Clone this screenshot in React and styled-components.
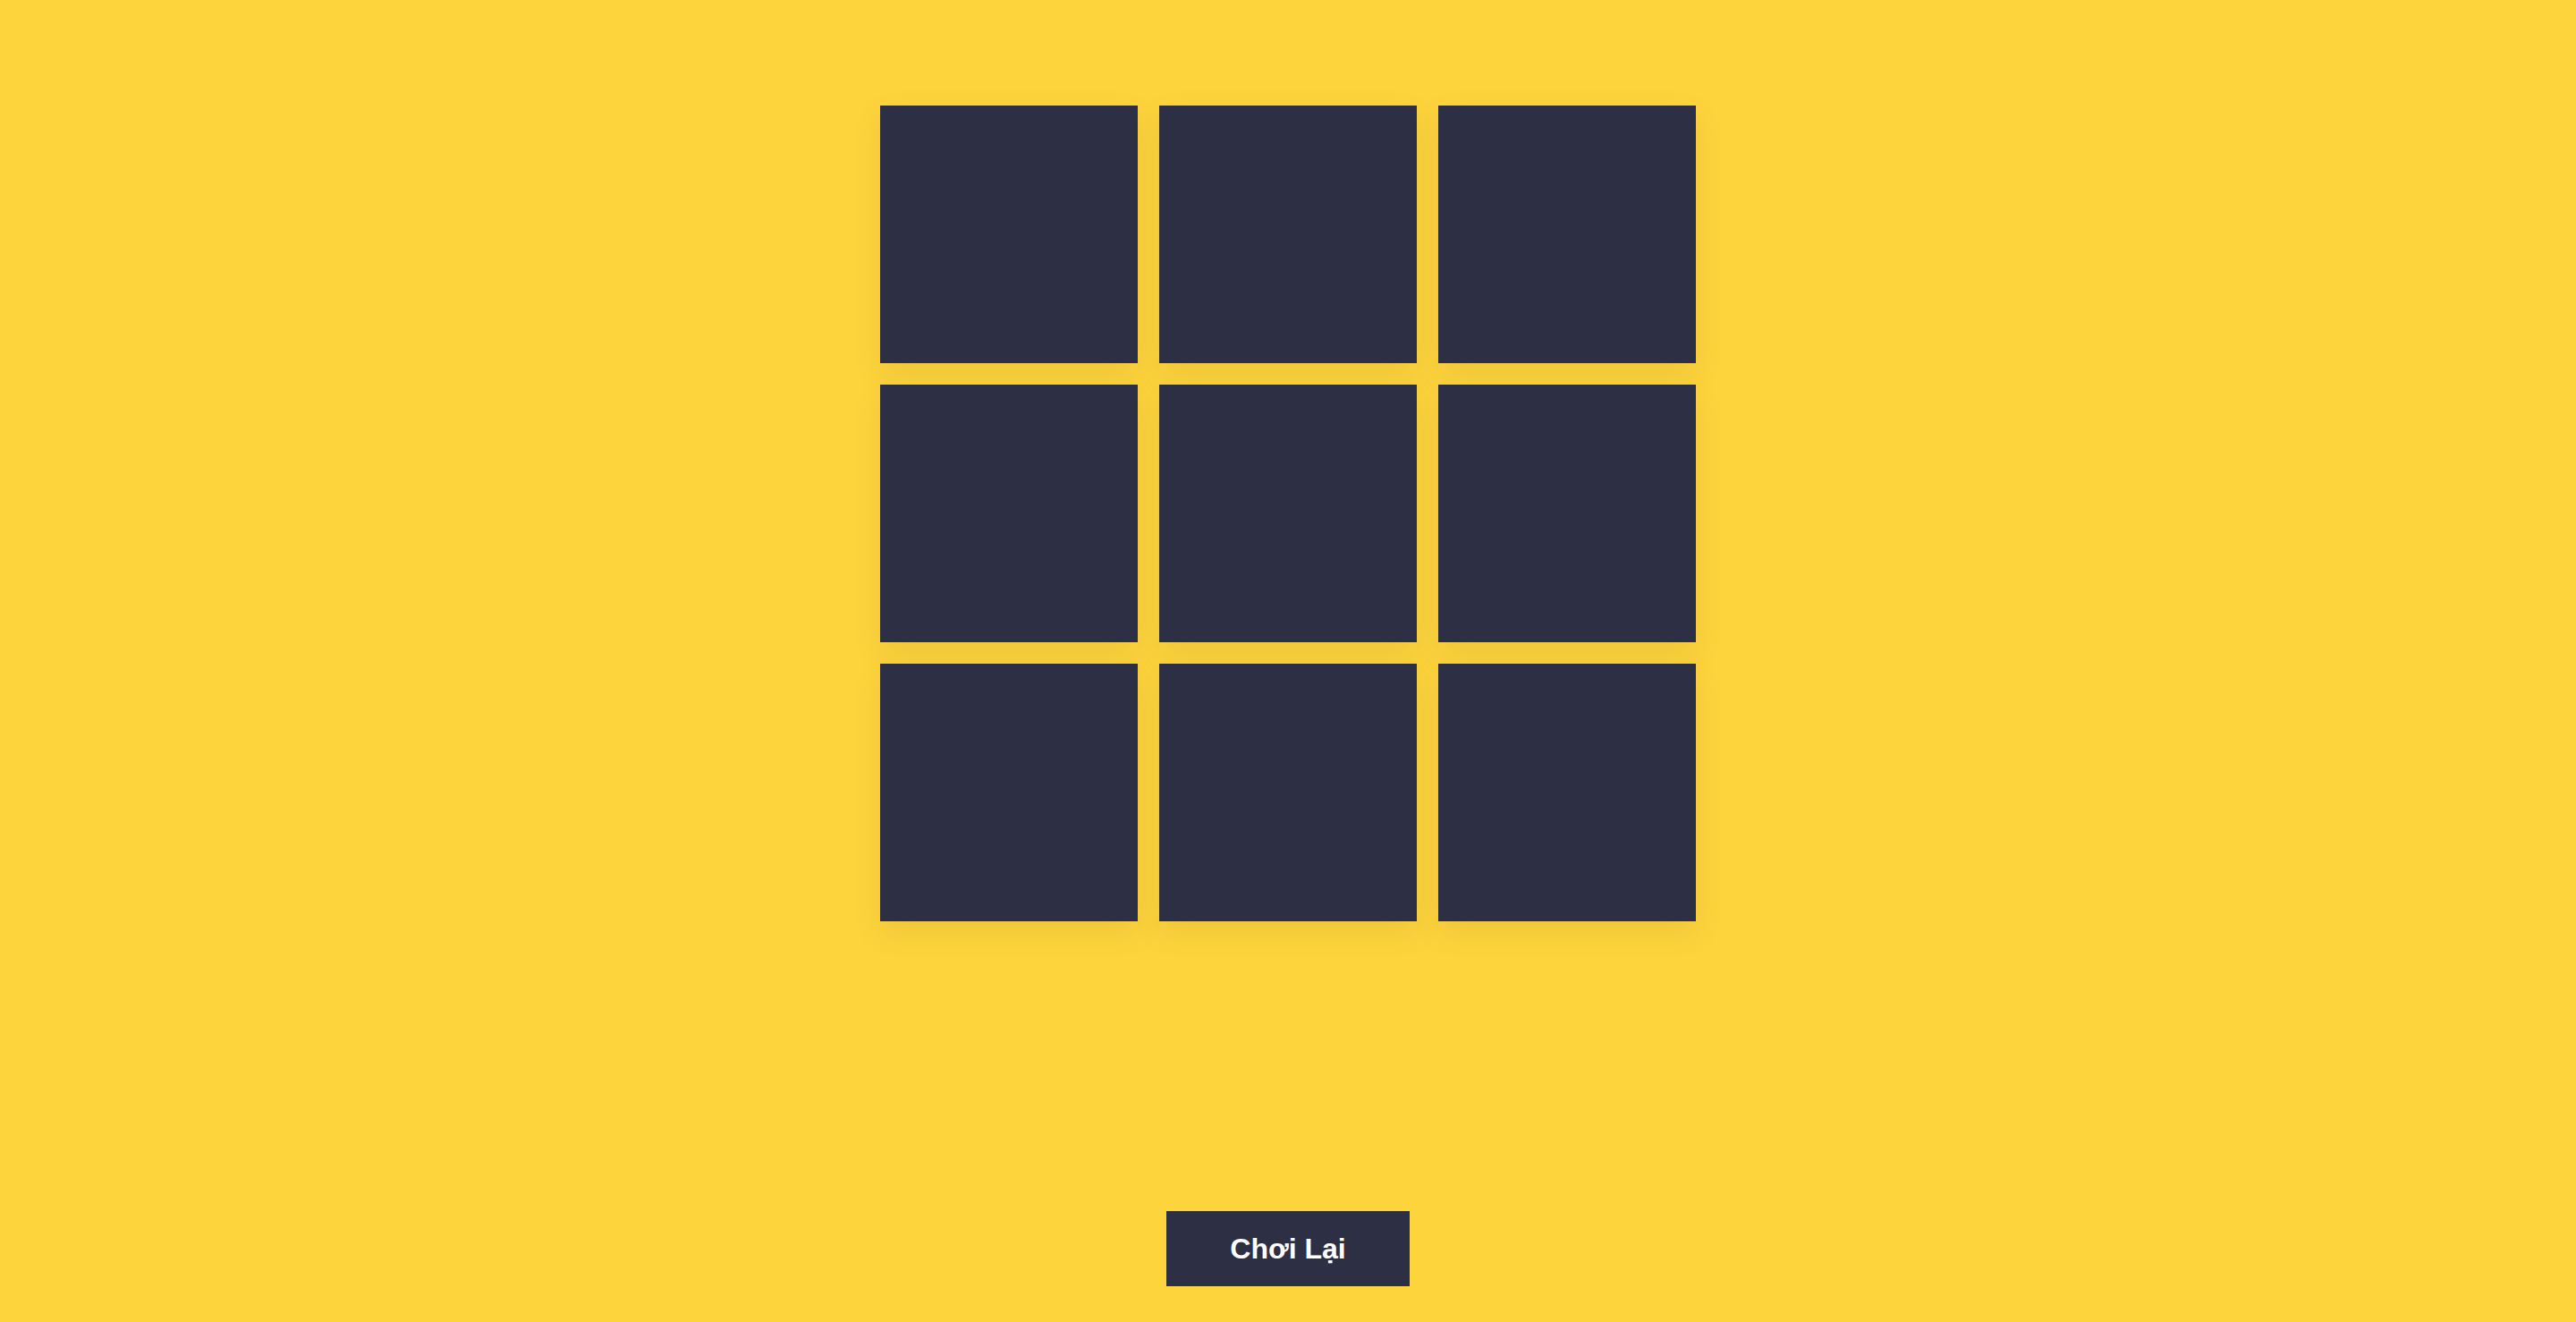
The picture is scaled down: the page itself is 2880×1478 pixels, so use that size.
import React from 'react';
import styled, { createGlobalStyle } from 'styled-components';

const GlobalStyle = createGlobalStyle`
  html, body {
    margin: 0;
    padding: 0;
    background-color: #fdd43c;
  }
  * {
    box-sizing: border-box;
  }
`;

const Page = styled.div`
  min-height: 100vh;
  display: flex;
  flex-direction: column;
  align-items: center;
  padding: 118px 0 40px;
  background-color: #fdd43c;
  font-family: "Liberation Sans", Arial, sans-serif;
`;

const Board = styled.div`
  display: grid;
  grid-template-columns: repeat(3, 288px);
  grid-auto-rows: 288px;
  gap: 24px;
`;

const Cell = styled.div`
  background-color: #2d2f44;
  box-shadow: 0 12px 30px rgba(120, 100, 60, 0.12);
`;

const ResetButton = styled.button`
  margin-top: auto;
  width: 272px;
  height: 84px;
  border: none;
  background-color: #2d2f44;
  color: #ffffff;
  font-family: "Liberation Sans", Arial, sans-serif;
  font-weight: bold;
  font-size: 32px;
  cursor: pointer;
`;

const App = () => {
  const cells = Array(9).fill(null);

  return (
    <Page>
      <GlobalStyle />
      <Board>
        {cells.map((cell, index) => (
          <Cell key={index} />
        ))}
      </Board>
      <ResetButton>Chơi Lại</ResetButton>
    </Page>
  );
};

export default App;
